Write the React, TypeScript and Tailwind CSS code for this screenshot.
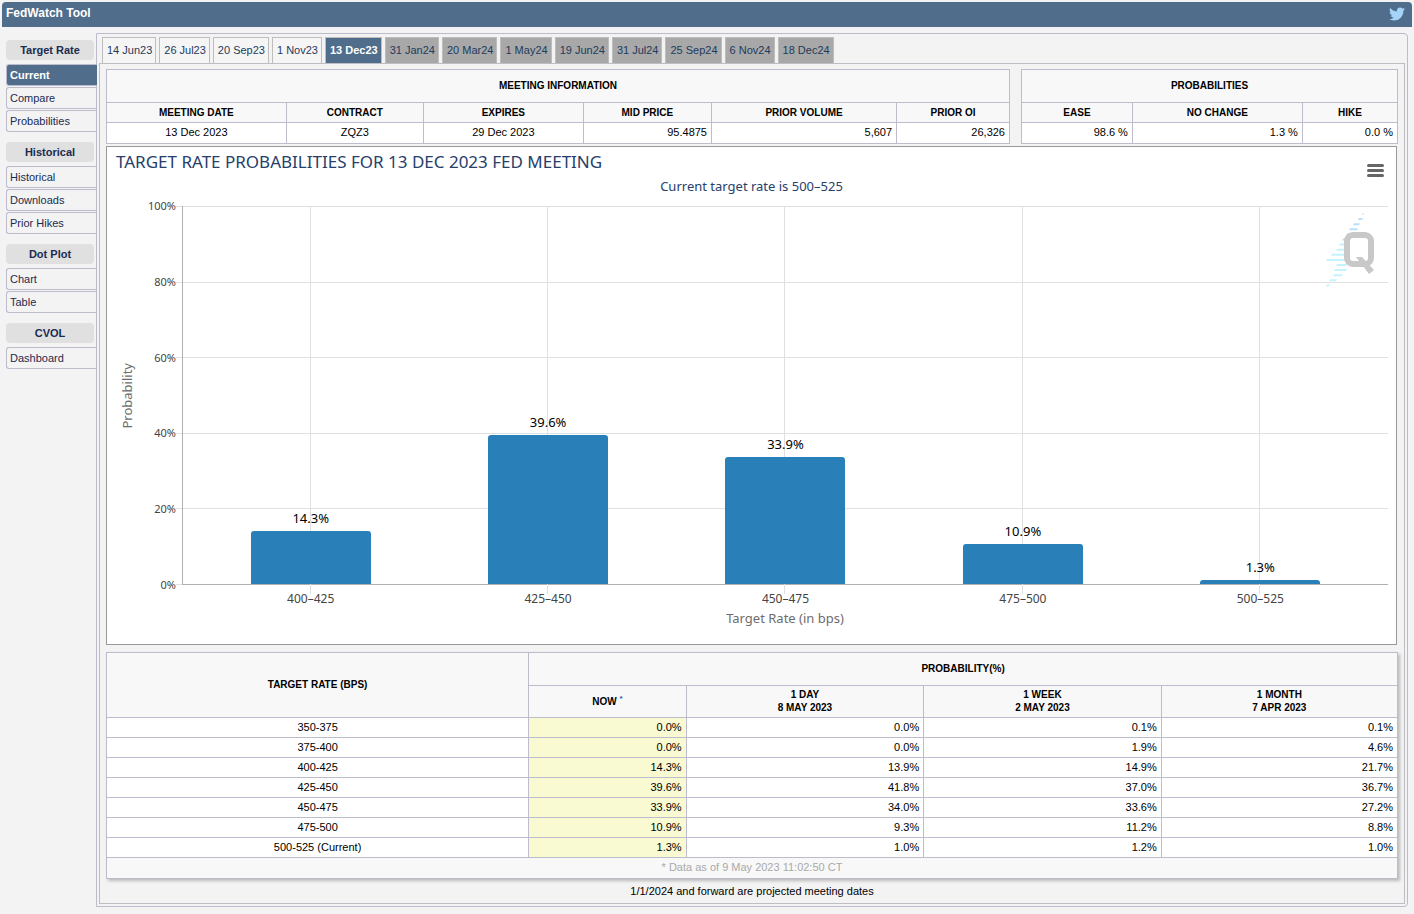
import { FaTwitter } from "react-icons/fa";
import clsx from "clsx";

const menu = [
  { title: "Target Rate", items: ["Current", "Compare", "Probabilities"] },
  { title: "Historical", items: ["Historical", "Downloads", "Prior Hikes"] },
  { title: "Dot Plot", items: ["Chart", "Table"] },
  { title: "CVOL", items: ["Dashboard"] },
];

const meetings = ["14 Jun23", "26 Jul23", "20 Sep23", "1 Nov23", "13 Dec23",
  "31 Jan24", "20 Mar24", "1 May24", "19 Jun24", "31 Jul24", "25 Sep24",
  "6 Nov24", "18 Dec24"];

const bars = [
  { range: "400–425", value: 14.3 },
  { range: "425–450", value: 39.6 },
  { range: "450–475", value: 33.9 },
  { range: "475–500", value: 10.9 },
  { range: "500–525", value: 1.3 },
];

const ticks = [100, 80, 60, 40, 20, 0];

const history = [
  ["350-375", "0.0%", "0.0%", "0.1%", "0.1%"],
  ["375-400", "0.0%", "0.0%", "1.9%", "4.6%"],
  ["400-425", "14.3%", "13.9%", "14.9%", "21.7%"],
  ["425-450", "39.6%", "41.8%", "37.0%", "36.7%"],
  ["450-475", "33.9%", "34.0%", "33.6%", "27.2%"],
  ["475-500", "10.9%", "9.3%", "11.2%", "8.8%"],
  ["500-525 (Current)", "1.3%", "1.0%", "1.2%", "1.0%"],
];

const table = "w-full table-fixed border-collapse bg-white text-[11px] leading-[13px] text-black";
const th = "border border-[#bcbccc] bg-[#f8f8f8] px-0 pt-0 pb-px text-center text-[10px] font-bold";
const td = "border border-[#bcbccc] px-1 pt-0 pb-px";

function Header() {
  return (
    <header className="mx-[2px] flex h-[25px] items-center justify-between
          rounded-t bg-[#506d8b] pr-[7px] pl-1">
      <h1 className="pb-[3px] text-[12px] leading-4 font-bold text-white">FedWatch Tool</h1>
      <a href="#twitter" aria-label="Twitter" className="pb-px">
        <FaTwitter className="size-4 text-[#a5d4f9]" />
      </a>
    </header>
  );
}

function Sidebar() {
  return (
    <nav className="flex w-[96px] shrink-0 flex-col gap-[10px] pt-[7px] pl-[6px]
          text-[11px] text-[#1b2b50]">
      {menu.map((group) => (
        <section key={group.title}>
          <h2 className="mr-[2px] mb-1 flex h-5 items-center justify-center rounded
                bg-[#e0e0e0] font-bold">{group.title}</h2>
          <ul className="flex flex-col gap-px">
            {group.items.map((item) => (
              <li key={item} className="flex h-[22px]">
                <a href="#view" className={clsx(
                  "flex grow items-center rounded-l-[3px] border border-r-0 border-[#bcbccc] pl-[3px]",
                  item === "Current" && "relative -mr-px bg-[#506d8b] font-bold text-white"
                )}>{item}</a>
              </li>
            ))}
          </ul>
        </section>
      ))}
    </nav>
  );
}

function Tabs() {
  return (
    <div role="tablist" className="flex gap-[3px] pl-[3px]">
      {meetings.map((meeting) => (
        <button key={meeting} role="tab" aria-selected={meeting === "13 Dec23"}
          className={clsx(
            "h-[26px] border border-b-0 border-[#bdbdbd] pr-[3px] pl-1 text-[11px] whitespace-nowrap",
            meeting === "13 Dec23"
              ? "bg-[#506d8b] font-bold text-white"
              : meeting.endsWith("24")
                ? "bg-[#a8a8a8] text-[#1d3b5c]"
                : "bg-[#f5f5f5] text-[#1d3b5c]"
          )}>{meeting}</button>
      ))}
    </div>
  );
}

function MeetingInfo() {
  return (
    <table className={table}>
      <colgroup>
        <col className="w-[19.9%]" />
        <col className="w-[15.2%]" />
        <col className="w-[17.7%]" />
        <col className="w-[14.2%]" />
        <col className="w-[20.5%]" />
        <col />
      </colgroup>
      <thead>
        <tr className="h-[33px]">
          <th colSpan={6} className={th}>MEETING INFORMATION</th>
        </tr>
        <tr className="h-5">
          <th className={th}>MEETING DATE</th>
          <th className={th}>CONTRACT</th>
          <th className={th}>EXPIRES</th>
          <th className={th}>MID PRICE</th>
          <th className={th}>PRIOR VOLUME</th>
          <th className={th}>PRIOR OI</th>
        </tr>
      </thead>
      <tbody>
        <tr className="h-[21px]">
          <td className={clsx(td, "text-center")}>13 Dec 2023</td>
          <td className={clsx(td, "text-center")}>ZQZ3</td>
          <td className={clsx(td, "text-center")}>29 Dec 2023</td>
          <td className={clsx(td, "text-right")}>95.4875</td>
          <td className={clsx(td, "text-right")}>5,607</td>
          <td className={clsx(td, "text-right")}>26,326</td>
        </tr>
      </tbody>
    </table>
  );
}

function Probabilities() {
  return (
    <table className={table}>
      <colgroup>
        <col className="w-[29.5%]" />
        <col className="w-[45.2%]" />
        <col />
      </colgroup>
      <thead>
        <tr className="h-[33px]">
          <th colSpan={3} className={th}>PROBABILITIES</th>
        </tr>
        <tr className="h-5">
          <th className={th}>EASE</th>
          <th className={th}>NO CHANGE</th>
          <th className={th}>HIKE</th>
        </tr>
      </thead>
      <tbody>
        <tr className="h-[21px]">
          <td className={clsx(td, "text-right")}>98.6 %</td>
          <td className={clsx(td, "text-right")}>1.3 %</td>
          <td className={clsx(td, "text-right")}>0.0 %</td>
        </tr>
      </tbody>
    </table>
  );
}

/* QuikStrike mark: striped bolt behind a square Q */
function Watermark() {
  const stripes = [
    [37, 1], [33, 4], [28, 6], [24, 8], [21, 9], [17, 10], [14, 10],
    [11, 12], [6, 16], [1, 20], [11, 10], [9, 12], [8, 9], [4, 7], [1, 3],
  ];
  return (
    <svg viewBox="0 0 50 76" className="absolute top-[6px] right-[13px] h-[76px] w-[50px]"
      aria-hidden="true">
      {stripes.map(([x, w], i) => (
        <path key={i} d={`M${x + 1} ${1 + i * 5.1}h${w}l-1 2h-${w}z`}
          fill={i < 6 ? "#b9e0fb" : "#c4f3fe"} />
      ))}
      <rect x="22" y="23" width="24" height="29" rx="6" fill="white" stroke="#c8c8c8" strokeWidth="6" />
      <path d="M31 45h6l12 13-5 4z" fill="#c8c8c8" />
    </svg>
  );
}

function Chart() {
  return (
    <section className="mr-px h-[499px] border border-[#999] bg-white font-['Noto_Sans',sans-serif]">
      <div className="flex h-[30px] items-center justify-between pr-3 pl-[9px]">
        <h2 className="text-[17px] leading-5 text-[#26406b]">
          TARGET RATE PROBABILITIES FOR 13 DEC 2023 FED MEETING
        </h2>
        <button aria-label="Chart menu" className="mt-4 flex w-[17px] flex-col gap-[2px]">
          <span className="h-[3px] w-full rounded-full bg-[#666]" />
          <span className="h-[3px] w-full rounded-full bg-[#666]" />
          <span className="h-[3px] w-full rounded-full bg-[#666]" />
        </button>
      </div>
      <p className="h-[29px] text-center text-[13px] leading-[18px] text-[#26406b]">
        Current target rate is 500–525
      </p>
      <div className="flex h-[379px] pr-2">
        <div className="flex w-10 items-center justify-center">
          <span className="rotate-180 text-[13px] leading-4 text-[#6d6d6d]
                [writing-mode:vertical-rl]">Probability</span>
        </div>
        <div className="-my-2 mr-[6px] flex w-[29px] flex-col justify-between text-right
              text-[11px] leading-4 text-[#444]">
          {ticks.map((tick) => <span key={tick}>{tick}%</span>)}
        </div>
        <div className="relative grow">
          <div className="absolute inset-y-0 right-0 -left-[6px] flex flex-col justify-between">
            {ticks.map((tick) => <div key={tick} className="h-px bg-[#e0e0e0]" />)}
          </div>
          <Watermark />
          <div className="relative grid h-full grid-cols-5 border-b border-l border-[#b0b0b0] px-[9px]">
            {bars.map((bar) => (
              <div key={bar.range} className="relative flex flex-col items-center justify-end">
                <div className="absolute inset-x-0 top-0 -bottom-[10px] flex justify-center pr-px">
                  <div className="w-px bg-[#e0e0e0]" />
                </div>
                <span className="relative mb-1 text-[13px] leading-[18px] text-black">
                  {bar.value}%
                </span>
                <div className="relative w-[120px] rounded-t-[3px] bg-[#2980b9]"
                  style={{ height: `calc(${bar.value}% - 1px)` }} />
              </div>
            ))}
          </div>
        </div>
      </div>
      <div className="mt-[6px] grid grid-cols-5 pr-[17px] pl-[85px] text-center text-[12px]
            leading-4 text-[#444]">
        {bars.map((bar) => <span key={bar.range}>{bar.range}</span>)}
      </div>
      <p className="mt-[3px] pr-2 pl-[75px] text-center text-[13px] leading-4 text-[#6d6d6d]">
        Target Rate (in bps)
      </p>
    </section>
  );
}

function HistoryTable() {
  return (
    <table className={clsx(table, "shadow-[2px_2px_3px_#bbb]")}>
      <colgroup>
        <col className="w-[32.7%]" />
        <col className="w-[12.2%]" />
        <col className="w-[18.4%]" />
        <col className="w-[18.4%]" />
        <col />
      </colgroup>
      <thead>
        <tr className="h-[33px]">
          <th rowSpan={2} className={th}>TARGET RATE (BPS)</th>
          <th colSpan={4} className={th}>PROBABILITY(%)</th>
        </tr>
        <tr className="h-8">
          <th className={th}>NOW <sup className="text-[8px] text-[#1d5c9c]">*</sup></th>
          <th className={th}>1 DAY<br />8 MAY 2023</th>
          <th className={th}>1 WEEK<br />2 MAY 2023</th>
          <th className={th}>1 MONTH<br />7 APR 2023</th>
        </tr>
      </thead>
      <tbody>
        {history.map(([range, now, ...past]) => (
          <tr key={range} className="h-5">
            <td className={clsx(td, "text-center")}>{range}</td>
            <td className={clsx(td, "bg-[#f9f9d2] text-right")}>{now}</td>
            {past.map((value, i) => (
              <td key={i} className={clsx(td, "text-right")}>{value}</td>
            ))}
          </tr>
        ))}
      </tbody>
      <tfoot>
        <tr className="h-[21px]">
          <td colSpan={5} className={clsx(td, "bg-[#f8f8f8] text-center text-[#a9a9a9]")}>
            * Data as of 9 May 2023 11:02:50 CT
          </td>
        </tr>
      </tfoot>
    </table>
  );
}

export default function App() {
  return (
    <div className="min-h-screen bg-[#f3f3f3] pt-[2px] font-['Liberation_Sans',Arial,sans-serif]">
      <Header />
      <div className="mt-[6px] flex pr-[6px]">
        <Sidebar />
        <main className="min-w-0 grow rounded-r border border-[#bcbccc] px-[2px] pt-[3px] pb-[2px]">
          <Tabs />
          <div className="border border-[#bdbdc4] px-[6px] pt-[5px] pb-1">
            <div className="mb-[2px] grid grid-cols-[904fr_377fr] gap-[11px]">
              <MeetingInfo />
              <Probabilities />
            </div>
            <Chart />
            <div className="mt-[7px]">
              <HistoryTable />
            </div>
            <p className="mt-1 text-center text-[11px] leading-4 text-black">
              1/1/2024 and forward are projected meeting dates
            </p>
          </div>
        </main>
      </div>
    </div>
  );
}
